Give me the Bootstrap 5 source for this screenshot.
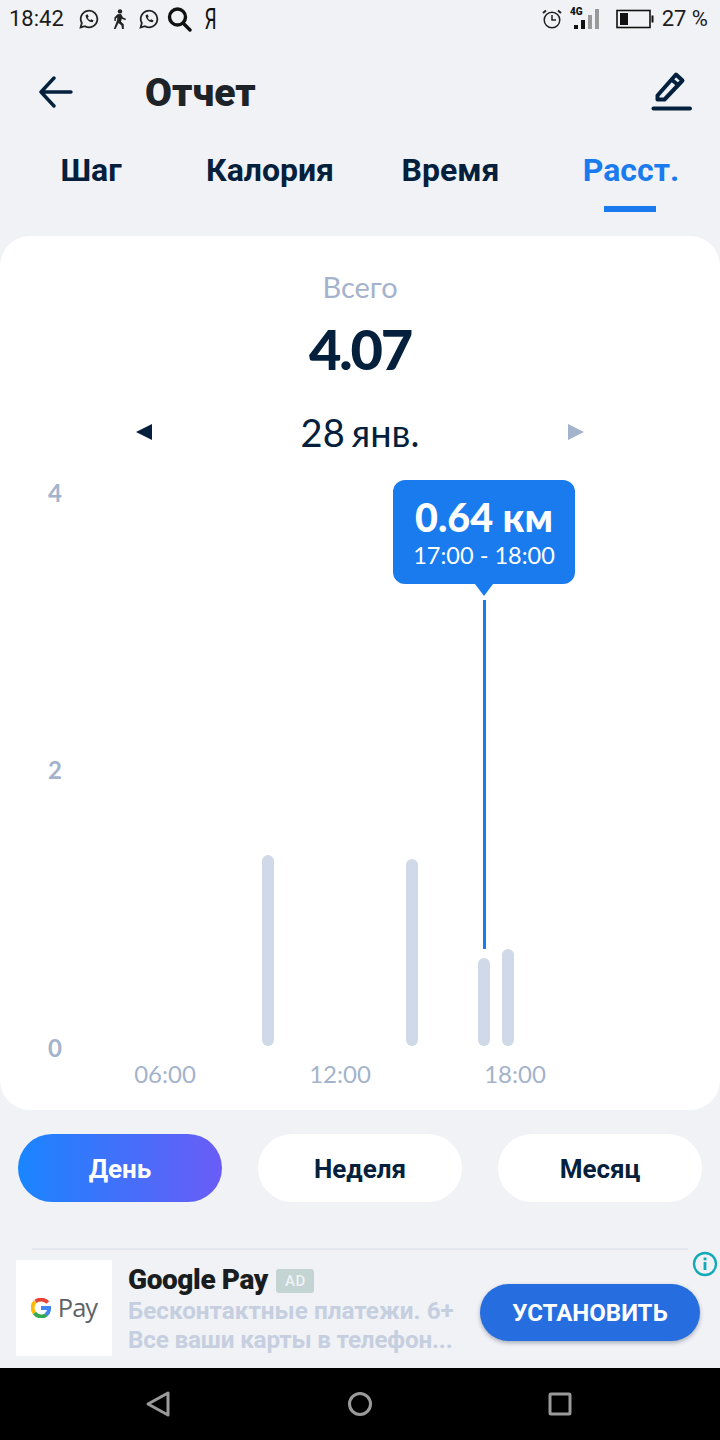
<!DOCTYPE html>
<html lang="ru">
<head>
    <meta charset="UTF-8">
    <meta name="viewport" content="width=device-width, initial-scale=1.0">
    <title>Отчет</title>
    <link href="https://cdn.jsdelivr.net/npm/bootstrap@5.3.3/dist/css/bootstrap.min.css" rel="stylesheet">
    <style>
        html, body { width: 720px; height: 1440px; margin: 0; overflow: hidden; background: #f0f2f6; }
        body { font-family: Roboto, sans-serif; color: #04203c; }
        .screen { width: 720px; height: 1440px; display: flex; flex-direction: column; }

        .status-bar { height: 38px; padding: 0 12px 0 9px; font-size: 22px; color: #1c1c1c; line-height: 38px; flex: none; }
        .status-left { gap: 13px; }
        .clock-text { margin-right: 2px; }
        .search-icon { margin-left: -5px; }
        .ya-glyph { display: inline-block; width: 14px; margin-left: -3px; text-align: center; font-size: 29px; font-weight: 400; line-height: 30px; transform: scaleX(.66); color: #111; }
        .net-icon { margin-right: 6px; }

        .top-bar { height: 108px; padding: 0 28px 0 38px; flex: none; }
        .page-title { font: 900 39px/1 Roboto, sans-serif; color: #1e2328; margin: 2px 0 0 71px; }

        .tab-row { height: 90px; flex: none; }
        .tab-cell { width: 180px; text-align: center; font: 700 32px/40px Roboto, sans-serif; color: #04203c; padding-top: 4px; height: 66px; position: relative; }
        .tab-cell.is-active { color: #1a7bee; padding-left: 2px; }
        .tab-cell.is-active::after { content: ""; position: absolute; left: 64px; top: 60px; width: 52px; height: 6px; background: #1a7bee; }
        .tab-1 { width: 182px; }
        .tab-2 { width: 176px; }
        .tab-3 { width: 182px; padding-left: 3px; }

        .report-panel { height: 874px; flex: none; background: #fff; border-radius: 30px; position: relative; text-align: center; }
        .total-label { font: 400 29px/32px Lato, Roboto, sans-serif; color: #a4b3cc; padding-top: 35px; }
        .total-value { font: 900 56px/64px Lato, Roboto, sans-serif; letter-spacing: -2.2px; color: #04203c; margin-top: 14px; }
        .date-row { margin-top: 28px; height: 46px; padding: 0 136px; font: 400 38px/46px Lato, Roboto, sans-serif; word-spacing: -3px; color: #04203c; }

        .chart-area { position: absolute; left: 0; top: 0; width: 720px; height: 874px; }
        .axis-y { position: absolute; left: 48px; font: 700 24px/28px Lato, Roboto, sans-serif; color: #a4b3cc; }
        .axis-x { position: absolute; top: 824px; width: 100px; font: 400 24px/28px Lato, Roboto, sans-serif; color: #a4b3cc; }
        .bar-item { position: absolute; width: 12px; bottom: 64px; background: #d0d9e8; border-radius: 6px; }
        .marker-line { position: absolute; left: 483px; top: 364px; width: 3px; height: 349px; background: #1a7bee; }
        .chart-tip { position: absolute; left: 393px; top: 244px; width: 182px; height: 104px; background: #1a7bee; border-radius: 12px; color: #fff; padding-top: 14px; }
        .chart-tip::after { content: ""; position: absolute; left: 82px; top: 104px; border: 9px solid transparent; border-top: 12px solid #1a7bee; border-bottom: 0; }
        .tip-value { font: 900 39.5px/46px Lato, Roboto, sans-serif; }
        .tip-range { font: 400 23.5px/30px Lato, Roboto, sans-serif; }

        .range-row { height: 68px; margin-top: 24px; padding: 0 18px; flex: none; }
        .range-btn { width: 204px; height: 68px; border-radius: 34px; background: #fff; border: 0; font: 700 26px/68px Roboto, sans-serif; color: #04203c; padding: 1px 0 0; }
        .range-btn.is-on { background: linear-gradient(90deg, #1a85ff, #6a5cf6); color: #fff; }
        .range-btn:hover { background: #fff; color: #04203c; }

        .ad-block { height: 166px; flex: none; position: relative; }
        .ad-rule { position: absolute; left: 32px; top: 46px; width: 656px; height: 2px; background: #e2e7f0; }
        .ad-info { position: absolute; left: 692px; top: 49px; }
        .ad-logo { position: absolute; left: 16px; top: 58px; width: 96px; height: 96px; background: #fff; display: flex; align-items: center; justify-content: center; gap: 7px; }
        .ad-logo span { font: 400 25.5px/1 "Open Sans", Roboto, sans-serif; color: #5f6368; letter-spacing: -1px; }
        .ad-copy { position: absolute; left: 128px; top: 61px; width: 345px; }
        .ad-name { font: 900 28px/33px Roboto, sans-serif; color: #1a1d20; letter-spacing: -.4px; }
        .ad-tag { display: inline-block; width: 38px; height: 24px; border-radius: 3px; background: #c3d4d2; color: #f0f2f6; font: 500 15px/24px Roboto, sans-serif; text-align: center; vertical-align: 3px; margin-left: 2px; letter-spacing: .5px; }
        .ad-text { font: 700 24.3px/29px Roboto, sans-serif; color: #c6cfe0; white-space: nowrap; }
        .ad-text-tight { letter-spacing: -.2px; }
        .ad-install { position: absolute; left: 480px; top: 82px; width: 220px; height: 57px; border-radius: 29px; border: 0; background: #266ddf; color: #fff; font: 700 24px/57px Roboto, sans-serif; padding: 1px 0 0; box-shadow: 0 2px 4px rgba(60,70,90,.4); }

        .nav-bar { height: 72px; background: #000; flex: none; }
    </style>
</head>
<body>
    <div class="screen">
        <div class="status-bar d-flex align-items-center justify-content-between">
            <div class="status-left d-flex align-items-center">
                <span class="clock-text">18:42</span>
                <svg width="20" height="20" viewBox="0 0 20 20" fill="none" stroke="#222" stroke-width="1.8"><path d="M1.600 18.400 2.800 14A8.300 8.300 0 1 1 6 17.200Z"/><path d="M6.600 6.200c0 3.600 3.400 7 7 7l1-1.800-2.400-1.200-1 1c-1-.5-2-1.500-2.500-2.500l1-1L8.500 5.300Z" fill="#222" stroke="none"/></svg>
                <svg width="14" height="20" viewBox="0 0 14 20" fill="#222"><circle cx="8" cy="2.400" r="2.200"/><path d="M5.500 5.200 9 5l2 3.600 3 1.200-.6 1.400-3.600-1.500-.8 2.800 2.800 3V20H10l-.5-3.500-3-2.600L3.600 20H1.800L5 11.500l.4-3-1.500.9v2.600H2.400V8.600Z"/></svg>
                <svg width="20" height="20" viewBox="0 0 20 20" fill="none" stroke="#222" stroke-width="1.8"><path d="M1.600 18.400 2.800 14A8.300 8.300 0 1 1 6 17.200Z"/><path d="M6.600 6.200c0 3.600 3.400 7 7 7l1-1.800-2.400-1.200-1 1c-1-.5-2-1.500-2.500-2.500l1-1L8.500 5.300Z" fill="#222" stroke="none"/></svg>
                <svg class="search-icon" width="25" height="25" viewBox="0 0 25 25" fill="none" stroke="#111" stroke-width="3.400"><circle cx="10.500" cy="10" r="8"/><path d="m16 16 7 7" stroke-linecap="round"/></svg>
                <span class="ya-glyph">Я</span>
            </div>
            <div class="d-flex align-items-center">
                <svg width="20" height="20" viewBox="0 0 20 20" fill="none" stroke="#222" stroke-width="1.500"><circle cx="10" cy="11" r="7.800"/><path d="M10 6v5h4"/><path d="M1 4 4 1.500M19 4l-3-2.500" stroke-width="2"/></svg>
                <svg class="ms-2 net-icon" width="32" height="26" viewBox="0 0 32 26"><text x="0" y="9" font-family="Roboto" font-weight="900" font-size="10" fill="#111">4G</text><rect x="4" y="19" width="4" height="4" fill="#111"/><rect x="11" y="14" width="4" height="9" fill="#111"/><rect x="18" y="9" width="4" height="14" fill="#999"/><rect x="25" y="3" width="4" height="20" fill="#999"/></svg>
                <svg class="ms-2" width="38" height="20" viewBox="0 0 38 20"><rect x="1" y="1.500" width="33" height="17" fill="none" stroke="#111" stroke-width="1.600"/><rect x="4" y="4" width="8" height="12" fill="#111"/><rect x="35.500" y="6.500" width="2" height="7" fill="#111"/></svg>
                <span class="ms-2">27 %</span>
            </div>
        </div>

        <div class="top-bar d-flex align-items-center justify-content-between">
            <div class="d-flex align-items-center">
                <svg width="36" height="32" viewBox="0 0 36 32" fill="none" stroke="#04203c" stroke-width="3.400" stroke-linecap="round" stroke-linejoin="round"><path d="M33 16H3M16 2 3 16l13 14"/></svg>
                <h1 class="page-title">Отчет</h1>
            </div>
            <svg width="42" height="42" viewBox="0 0 42 42" fill="none" stroke="#04203c" stroke-width="4" stroke-linejoin="round"><path d="M7.500 28.500v-4L26 3.500l6.500 6-18 19Z"/><path d="m20.700 8 8.800 7"/><path d="M3.500 37.500h36.500" stroke-linecap="round"/></svg>
        </div>

        <div class="tab-row d-flex">
            <div class="tab-cell tab-1">Шаг</div>
            <div class="tab-cell tab-2">Калория</div>
            <div class="tab-cell tab-3">Время</div>
            <div class="tab-cell is-active">Расст.</div>
        </div>

        <div class="report-panel">
            <div class="total-label">Всего</div>
            <div class="total-value">4.07</div>
            <div class="date-row d-flex align-items-center justify-content-between">
                <svg width="16" height="16" viewBox="0 0 16 16" fill="#04203c"><path d="M0 8 16 0v16Z"/></svg>
                <span>28 янв.</span>
                <svg width="16" height="16" viewBox="0 0 16 16" fill="#a4b3cc"><path d="M16 8 0 0v16Z"/></svg>
            </div>
            <div class="chart-area">
                <div class="axis-y" style="top:243px">4</div>
                <div class="axis-y" style="top:520px">2</div>
                <div class="axis-y" style="top:798px">0</div>
                <div class="bar-item" style="left:262px;height:191px"></div>
                <div class="bar-item" style="left:406px;height:187px"></div>
                <div class="bar-item" style="left:478px;height:88px"></div>
                <div class="bar-item" style="left:502px;height:97px"></div>
                <div class="marker-line"></div>
                <div class="chart-tip">
                    <div class="tip-value">0.64 км</div>
                    <div class="tip-range">17:00 - 18:00</div>
                </div>
                <div class="axis-x" style="left:115px">06:00</div>
                <div class="axis-x" style="left:290px">12:00</div>
                <div class="axis-x" style="left:465px">18:00</div>
            </div>
        </div>

        <div class="range-row d-flex justify-content-between">
            <button class="btn range-btn is-on">День</button>
            <button class="btn range-btn">Неделя</button>
            <button class="btn range-btn">Месяц</button>
        </div>

        <div class="ad-block">
            <div class="ad-rule"></div>
            <svg class="ad-info" width="26" height="26" viewBox="0 0 26 26"><circle cx="13" cy="13" r="11" fill="none" stroke="#12a9b8" stroke-width="2.400"/><rect x="11.600" y="11" width="2.800" height="8" fill="#12a9b8"/><rect x="11.600" y="6.500" width="2.800" height="2.800" fill="#12a9b8"/></svg>
            <div class="ad-logo">
                <svg width="20" height="20" viewBox="0 0 22 22" fill="none" stroke-width="4.200"><path d="M18.500 5A10 10 0 0 0 5 3.800" stroke="#ea4335"/><path d="M4.500 4A9.500 9.500 0 0 0 3.800 16.500" stroke="#fbbc04"/><path d="M3.800 16.500A9.500 9.500 0 0 0 17 18.500" stroke="#34a853"/><path d="M11 11h9a9 9 0 0 1-3.500 7.500" stroke="#4285f4"/></svg>
                <span>Pay</span>
            </div>
            <div class="ad-copy">
                <div class="ad-name">Google Pay <span class="ad-tag">AD</span></div>
                <div class="ad-text">Бесконтактные платежи. 6+</div>
                <div class="ad-text ad-text-tight">Все ваши карты в телефон...</div>
            </div>
            <button class="btn ad-install">УСТАНОВИТЬ</button>
        </div>

        <div class="nav-bar d-flex align-items-center">
            <svg width="720" height="72" viewBox="0 0 720 72" fill="none" stroke="#9a9a9a" stroke-width="3" stroke-linejoin="round"><path d="M168 25v22l-20-11Z"/><circle cx="360" cy="36" r="10.500"/><rect x="550" y="26" width="20" height="20" rx="1"/></svg>
        </div>
    </div>
</body>
</html>
